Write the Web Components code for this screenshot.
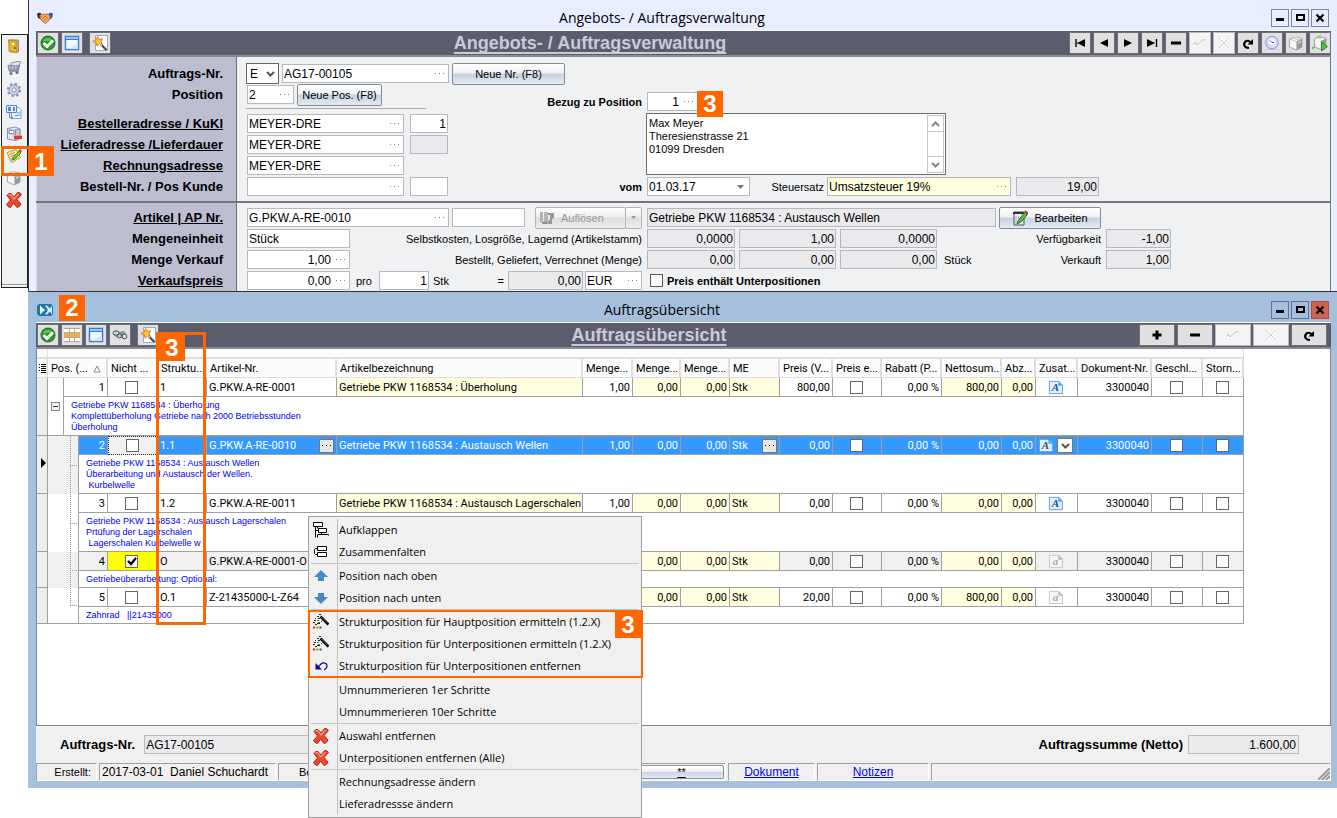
<!DOCTYPE html>
<html lang="de">
<head>
<meta charset="utf-8">
<title>Angebots- / Auftragsverwaltung</title>
<style>
html,body{margin:0;background:#fff}
body{font:11px "Liberation Sans",Arial,sans-serif;color:#000}
</style>
</head>
<body>
<order-desktop></order-desktop>
<script>
const ICONS = {
door:'<path d="M2.500 2h10v12h-8z" fill="#c9c9cc" stroke="#8f8f94"/><path d="M3 2l8 .5v12L3 13z" fill="#e9b92e" stroke="#b98a12"/><path d="M5 4h4v4H5z" fill="#fff3b8" stroke="#c39a25"/><circle cx="9" cy="10" r="1" fill="#7a5500"/>',
cart:'<path d="M2 5.500l11-1-1 5-9 1z" fill="#b4bcdf" stroke="#7880a5"/><path d="M5 5V3l7-1.500 3 .5-2 3" fill="#e8eaf2" stroke="#8b8b93"/><path d="M3 11h9l1.500-6" stroke="#85858c" stroke-width="1.400" fill="none"/><path d="M5 5v5M8 5v5M11 5v4" stroke="#7f88b5"/><circle cx="5" cy="13.500" r="1.500" fill="#6f6f77"/><circle cx="11" cy="12.500" r="1.500" fill="#6f6f77"/>',
gear:'<circle cx="8" cy="8" r="6" fill="none" stroke="#8b93b8" stroke-width="2.400" stroke-dasharray="2.350 2.350"/><circle cx="8" cy="8" r="5" fill="#d3d8ee" stroke="#8790b8"/><circle cx="8" cy="8" r="2.200" fill="#f4f5fa" stroke="#7d86ab"/>',
docs:'<path d="M9 3.500h4l2 2v9H5.500V9" fill="#f4f8ff" stroke="#7ba2dc"/><path d="M.5 1.500h10v7H.5z" fill="#eaf2ff" stroke="#4f86d6"/><path d="M2 3h3v4H2zM7 3h2v4H7z" fill="#4d86d6"/><path d="M3.500 9v4.500H6M5 12l2 1.500L5 15M11 9h3M9 12l5-1" stroke="#5c8bd0" fill="none"/>',
cabinet:'<path d="M1.500 2.500l8-1.500 4.500 2v9.500l-4.500 2-8-1.500z" fill="#e3e6f3" stroke="#8a90b5"/><path d="M9.500 3.500L14 3v9.500l-4.500 2z" fill="#c1c7e2" stroke="#8a90b5"/><path d="M3 4l5 .5V8L3 7.500z" stroke="#7079ad" fill="#fff"/><path d="M8 9h8v4H8z" rx="2" fill="#e03a1c"/><path d="M8 9h8v1H8z" fill="#f28a72"/>',
note:'<path d="M1 4.500l9-3 4.500 8-9 5z" fill="#f4ec9c" stroke="#a9a04a"/><path d="M3.500 6.500l5-2M4.500 8.500l5-2M5.500 10.500l4-2M6.500 12l4-2" stroke="#a89d50"/><path d="M7 9.500l6-6.500 2 2-6 6-3 1z" fill="#78cc3c" stroke="#3d8f22"/><path d="M12.500 2.500L14 1l2 2-1.500 2z" fill="#e04434"/>',
boxg:'<path d="M1.500 4l6-2.500 6.500 2v8.500L8.500 15l-7-3z" fill="#f7f7f7" stroke="#a6a6a6"/><path d="M8.500 6.500L14 3.500V12l-5.500 3z" fill="#979797"/><path d="M10 7l3-1.500v2L10 9.500z" fill="#c9c9c9"/><path d="M1.500 4l7 2.500L14 3.500M4.500 2.800l6.500 2" stroke="#c4c4c4" fill="none"/><path d="M5 .5h4v3H6z" fill="#cfe0c6"/>',
cross:'<path d="M1 3.500Q2.500.5 5 1.500L8 5l3.500-4.500Q14 0 15.500 2.500L11 7.500l4 4.500q-1 3-4 3.500L7.500 11l-3 4.500Q1.500 15 .5 12.500L4.500 8z" fill="#e8492f" stroke="#b22410"/><path d="M2.500 3.500Q3.500 2 5 3l3 4 4.500-5" stroke="#ff9c84" fill="none" stroke-width="1.200"/>',
hands:'<path d="M0 4q1-2 4-1l1 4-3 2q-2-2-2-5z" fill="#2a3340"/><path d="M16 4q-1-2-4-1l-1 4 3 2q2-2 2-5z" fill="#1c5fc8"/><path d="M3 5l3-1 2 .5L11 4l2 2-.5 4-4 3.500-5-4z" fill="#f2a45e" stroke="#bf6a2c"/><path d="M5 9l3-3 3 3M7 11l2-2" stroke="#c66f33" fill="none"/>',
check:'<circle cx="8" cy="8" r="7" fill="#2d9a2e" stroke="#1a6a1c"/><path d="M2.500 6a6 5 0 0 1 11 0z" fill="#79cf6e" opacity=".7"/><path d="M3.500 8l3.500 3.500 6-6" stroke="#fff" stroke-width="3" fill="none"/>',
form:'<path d="M1.500 1.500h13v13h-13z" fill="#f4f7ff" stroke="#3380d6" stroke-width="1.400"/><path d="M1.500 1.500h13v3h-13z" fill="#9ccaf8" stroke="#3380d6"/><path d="M4 14h10V8z" fill="#d9e3fa"/>',
wand:'<path d="M3.500.5h12v15h-12z" fill="#fafcff" stroke="#9aaccc"/><path d="M5.500 1.500l1.700 3 3.300-.7-1.500 3 1.500 2.700-3.200-.5L5 11l-.8-3.200L.8 6.500l3.500-1.500z" fill="#ffc83a" stroke="#d9800c"/><path d="M8.500 9l6 6" stroke="#4a4a4a" stroke-width="2.200"/><path d="M8 8.500l2 2" stroke="#c9c9c9" stroke-width="1.600"/>',
grid:'<path d="M0 1h16v14H0z" fill="#fff"/><path d="M0 6h16v5H0z" fill="#f9ab38"/><path d="M0 5.500h16M0 10.500h16M5.500 1v14M10.500 1v14M0 1.500h16M0 14.500h16" stroke="#b5a9a0"/>',
binoc:'<path d="M1 5q2-3 5-1l2 1q3-2 5 0l2 4-2 3-4-1-2 0-3-1-3-2z" fill="#8a939e"/><ellipse cx="4" cy="6" rx="3" ry="2" fill="#d5dbe1" stroke="#566"/><circle cx="12.500" cy="9.500" r="2.300" fill="#e2e7ec" stroke="#455"/><circle cx="7.500" cy="9" r="2" fill="#cdd4db" stroke="#455"/>',
first:'<path d="M4 4v8" stroke="#000" stroke-width="1.400"/><path d="M5 7.500h1L13 4v8L6 8.500H5z"/>',
prev:'<path d="M4 8l8-4v8z"/>', next:'<path d="M4 4l8 4-8 4z"/>',
last:'<path d="M3 4l8 4-8 4z"/><path d="M12.500 4v8" stroke="#000" stroke-width="1.400"/>',
minus2:'<path d="M3 6.500h10v3H3z"/>', plus:'<path d="M6.500 3.500h3v3h3v3h-3v3h-3v-3h-3v-3h3z"/>',
ok0:'<path d="M1.500 9.500l2-2 2 2.500 5-5h3" stroke="#b5b5b5" fill="none"/><path d="M2.500 10.500l2 1.500 4-4 4-3" stroke="#fff" fill="none"/>',
x0:'<path d="M4 3l9 10M13 3L4 13" stroke="#fff" stroke-width="2.500"/><path d="M3 3l10 10M13 3L3 13" stroke="#b5b5b5" stroke-dasharray="2 1"/>',
redo:'<path d="M9 13c-5 0-6-4-3.500-6.500C7.500 5 10 6 11 8" stroke="#000" stroke-width="2.200" fill="none"/><path d="M13 4v5.500H7.500z"/>',
clock:'<path d="M4 13l-1 2h10l-1-2z" fill="#c9cbe8"/><circle cx="8" cy="7.500" r="6.300" fill="#dadefa" stroke="#8e96d8"/><circle cx="8" cy="7" r="4.200" fill="#f9faff" stroke="#bfc4ef"/><path d="M8 7.500L6 5.500M8 7.500h2" stroke="#4d57a3"/>',
boxrun:'<path d="M2.500 4l5-2.500 6.500 2v8L9 14.500 2.500 12z" fill="#f7f7f7" stroke="#a6a6a6"/><path d="M9 6l5-2.500v8L9 14.500z" fill="#979797"/><path d="M5 .5h4v3H6z" fill="#8fcf7e"/><path d="M0 13q3 0 3-4M1 12l-1 1 2 1.500" stroke="#5fae56" fill="none"/><path d="M9.500 7l6 4.500-6 4.500z" fill="#4cc93c" stroke="#238c18"/>',
app:'<path d="M2 2h12l2 2v8l-2 2H2l-2-2V4z" fill="#1b78ae"/><path d="M3 3.500v9l5-4.500z" fill="#fff"/><path d="M8 3.500h2l3 3 2-3v9l-2-3-3 3H8L11 8z" fill="#d9effa"/>',
edit:'<path d="M2 2h10v13H2z" fill="#eaf0fb" stroke="#3c4a68"/><path d="M1 2h11v2H1z" fill="#333"/><path d="M4 6v8M6.500 6v8" stroke="#e39a9a"/><path d="M6 11l6-8 3 2-6 7-4 2z" fill="#55c23c" stroke="#237a16"/><path d="M12 2l1-1.500L16 2v3z" fill="#d3281c"/>',
parts:'<path d="M1 2h3v10H1zM5 2h4v12H5z" fill="#b4b4b4"/><path d="M9 3h6v5l-2 1v5H9v-3l2-1V5H9z" fill="#989898"/><path d="M2 12h6v2H4z" fill="#8a8a8a"/>',
expand:'<path d="M.5.500h9v4h-9zM5.500 6.500h8v4h-8z" fill="#fff" stroke="#000"/><path d="M2.500 4.500v11M4.500 4.500v2M2.500 8.500h3M4.500 15.500v-3h4M8.500 10.500v2h7v1" stroke="#000" fill="none"/>',
collapse:'<path d="M4.500 2.500h9v4h-9zM4.500 8.500h9v4h-9z" fill="#fff" stroke="#000"/><path d="M4.500 4.500h-2l-1 1v4l1 1h2" fill="none" stroke="#000"/>',
up:'<path d="M8 2l7 7h-4v4H5V9H1z" fill="#4d86c4"/>', down:'<path d="M8 14l7-7h-4V3H5v4H1z" fill="#4d86c4"/>',
magic:'<path d="M7.500 2.500l8 8" stroke="#000" stroke-width="2.600"/><path d="M8.500 3l6 6" stroke="#999" stroke-width=".6"/><path d="M6 .5h2M4 2.500h2M2 4.500h1M5 4.500h2M1 6.500h2M0 8.500h2M4 9.500h3M8 7.500h1M2 10.500h2" stroke="#222"/><path d="M4 6.500h2M5 8.500h2" stroke="#2a9a2a"/><path d="M0 13.500h2" stroke="#c22" stroke-width="2"/><path d="M3 13.500h2M5.500 13.500h.5" stroke="#aa2" stroke-width="2"/><path d="M6.500 13.500h2" stroke="#171" stroke-width="2"/>',
undo:'<path d="M4 10l4-4c2-2 6-1 6 1.500 0 2-1 3.500-3 4.500" stroke="#0a0a90" fill="none" stroke-width="1.200"/><path d="M2.500 5v6.500H9z" fill="#0a0a90"/>',
doca:'<path d="M1.500 1.500h10l4 4v9h-14z" fill="#e4effc" stroke="#5ba0e0"/><path d="M11 1l5 5h-5z" fill="#58a6ec"/>',
docg:'<path d="M1.500 1.500h10l4 4v9h-14z" fill="#f5f5f5" stroke="#c4c4c4"/><path d="M11 1l5 5h-5z" fill="#bbb"/>'
};
const svg = (n, s = 16) => `<svg viewBox="0 0 16 16" width="${s}" height="${s}" aria-hidden="true">${ICONS[n]}</svg>`;
const chev = (d, c = '#555') => `<svg viewBox="0 0 9 6" width="9" height="6" aria-hidden="true"><path d="${d}" fill="none" stroke="${c}" stroke-width="2"/></svg>`;
const DOWN = 'M1 1l3.500 3.500L8 1', UP = 'M1 5l3.500-3.500L8 5';
const DOTS = c => `<svg viewBox="0 0 9 2" width="9" height="2" aria-hidden="true"><path d="M0 0h1v1H0zM4 0h1v1H4zM8 0h1v1H8z" fill="${c}"/></svg>`;

const define = (name, html) => {
  customElements.define(name, class extends HTMLElement {
    constructor() {
      super();
      const t = document.createElement('template');
      t.innerHTML = typeof html === 'function' ? html(this) : html;
      this.attachShadow({ mode: 'open' }).append(t.content.cloneNode(true));
    }
  });
};

/* ---- numbered orange marks ---- */
define('call-out', `<style>
:host{position:absolute;box-sizing:border-box;z-index:5;pointer-events:none;border:0 solid #f60}
b{display:flex;align-items:center;justify-content:center;box-sizing:border-box;width:26px;height:26px;background:#f60;color:#fff;font:700 24px/26px "Liberation Sans",sans-serif}
</style><b><slot></slot></b>`);

/* ---- application window ---- */
define('app-window', el => `<style>
:host{display:flex;flex-direction:column;box-sizing:border-box;background:var(--frame);padding:0 6px 0 7px;border-left:1px solid var(--edge)}
header{display:flex;align-items:center;height:30px;padding:6px 2px 0 1px;box-sizing:border-box}
h1{flex:1;margin:0;text-align:center;font:400 14px/20px "Open Sans",sans-serif}
nav{display:flex;gap:2px}
nav button{width:18px;height:18px;padding:0;border:1px solid var(--btn);background:transparent;display:grid;place-items:center}
nav button.red{background:#cf6350;border-color:#b04a3a}
header>svg{display:block}
</style><header>${svg(el.getAttribute('icon'))}<h1><slot name="title"></slot></h1>
<nav><button aria-label="Minimieren"><svg width="10" height="10"><path d="M1 5h8v3H1z"/></svg></button>
<button aria-label="Maximieren"><svg width="10" height="10"><path d="M2 2h7v5H2z" fill="none" stroke="#000" stroke-width="2"/></svg></button>
<button class="${el.hasAttribute('active') ? 'red' : ''}" aria-label="Schließen"><svg width="10" height="10"><path d="M1.500 1.500l7 7M8.500 1.500l-7 7" stroke="#000" stroke-width="2.200"/></svg></button></nav></header><slot></slot>`);

/* ---- toolbar and its buttons ---- */
define('tool-bar', `<style>
:host{display:flex;align-items:center;height:24px;padding:0 0 0 1px;background:#5b5d6d;border-top:1px solid #fff;border-bottom:2px solid #8c8c92;gap:2px;flex:none}
h2{flex:1;margin:0;text-align:center;color:#c9cadb;font:700 18px/22px "Liberation Sans",sans-serif;text-decoration:underline;text-underline-offset:3px;text-decoration-skip-ink:none;text-decoration-thickness:2px}
</style><slot name="start"></slot><h2><slot></slot></h2><slot name="end"></slot>`);
define('tool-button', el => `<style>
:host{display:block}
:host([apart]){margin-left:4px}
button{display:grid;place-items:center;box-sizing:border-box;width:22px;height:22px;padding:0;background:#e0e0e0;border:1px solid #6f6f78;outline:0}
:host([wide]) button{width:36px}
button:disabled{background:#f4f4f4;border-color:#b8bac4}
</style><button aria-label="${el.getAttribute('label')}" ${el.hasAttribute('off') ? 'disabled' : ''}>${svg(el.getAttribute('icon'))}</button>`);

/* ---- vertical icon strip ---- */
const SIDE = [['door','Beenden'],['cart','Einkauf'],['gear','Einstellungen'],['docs','Dokumente'],['cabinet','Ablage'],['note','Auftrag bearbeiten'],['boxg','Lager'],['cross','Löschen']];
define('icon-strip', `<style>
:host{display:flex;flex-direction:column;align-items:center;gap:4px;box-sizing:border-box;width:27px;height:254px;padding:2px 2px 0 0;border:1px solid #222;background:#f0f1f3;box-shadow:inset 0 -2px #f0f1f3,inset 0 -3px #999}
button{width:18px;height:18px;padding:0;border:0;background:none;display:grid;place-items:center}
</style>${SIDE.map(([i, l]) => `<button aria-label="${l}">${svg(i)}</button>`).join('')}`);

/* ---- order form ---- */
const f = (id, val, w, o = '') => {
  const cls = o.split(' ').filter(x => x !== 'dots').join(' ');
  return `<span class="f ${cls}" style="width:${w}px"><input id="${id}" value="${val}" aria-label="${id}" ${cls.includes('ro') ? 'readonly' : ''}>${o.includes('dots') ? `<button class="d" aria-label="Auswahl">${DOTS('#888')}</button>` : ''}${o.includes('date') ? '<button class="d" aria-label="Kalender"><svg width="7" height="4"><path d="M0 0h7L3.500 4z" fill="#777"/></svg></button>' : ''}</span>`;
};
define('order-form', `<style>
:host{display:block;background:#f0f1f3;border-right:1px solid #777}
section{display:grid;grid-template-columns:201px 1fr}
section+section{border-top:2px solid #75767c}
.names{box-sizing:border-box;background:#bcbed0;border-right:1px solid #707078;border-left:1px solid #dcdde6;padding:6px 13px 4px 0;font:700 13px/21px "Liberation Sans",sans-serif;text-align:right;display:flex;flex-direction:column}
.names label,.names a{display:block;height:21px;color:#000;white-space:nowrap}
.names .gap{height:8px}
section+section .names{padding:4px 13px 0 0}
.body{display:flex;align-items:flex-start;padding:6px 0 0 10px;gap:5px}
section+section .body{padding-top:4px}
.col{display:flex;flex-direction:column}
.row{display:flex;align-items:center;height:21px;white-space:nowrap}
.left{width:395px}
.end{margin-left:auto}
.f{display:flex;flex:none;align-items:center;box-sizing:border-box;height:19px;border:1px solid #b5b8bf;background:#fff}
.ro{background:#eaeaec}.y{background:#ffffdf}
input,select,textarea{font:12px "Liberation Sans",sans-serif;color:#000}
.f input{flex:1;min-width:0;width:0;height:17px;box-sizing:border-box;padding:0 1px;border:0;background:none;outline:0}
.num input{text-align:right}
.d{width:17px;height:15px;flex:none;border:0;padding:0;background:none;display:grid;place-items:center}
.sel{position:relative;display:flex;width:33px;height:21px;margin-left:-1px}
.sel select{appearance:none;box-sizing:border-box;width:33px;height:21px;border:1px solid #666;border-radius:0;background:#fff;padding:0 3px}
.sel svg{position:absolute;right:4px;top:8px}
.b{box-sizing:border-box;height:22px;display:flex;align-items:center;justify-content:center;gap:6px;padding:0;font:11px "Liberation Sans",sans-serif;color:#000;border:1px solid #858b96;border-radius:2px;background:linear-gradient(#fff,#eef2f6 45%,#c6d2e0 50%,#e3eaf2)}
.b:disabled{color:#999;border-color:#b5b5b5;background:linear-gradient(#fff,#eee 45%,#ddd 50%,#eee)}
.split{display:flex;margin-left:10px}
.split .b+.b{width:17px;margin-left:-1px}
.split .b:first-child{justify-content:flex-start;padding-left:3px}
hr{width:180px;height:1px;border:0;background:#a9a9ad;margin:3px 0 4px -1px}
.r1{display:grid;grid-template-columns:105px auto;column-gap:5px;align-items:center;margin-top:28px;margin-left:-110px}
.r1>label{text-align:right;font-weight:700}
.addr{display:flex;box-sizing:border-box;width:300px;height:62px;margin:1px 0 1px -1px;border:1px solid #6f6f6f;background:#fff;padding:1px}
textarea{flex:1;min-width:0;resize:none;border:0;outline:0;padding:2px 1px;overflow:hidden;font:11px/13px "Liberation Sans",sans-serif;height:54px}
.sb{display:flex;flex-direction:column;justify-content:space-between;width:15px;border:1px solid #c4c4c8}
.sb button{height:16px;border:0;border-bottom:1px solid #c4c4c8;background:#fff;padding:0;display:grid;place-items:center}
.sb button+button{border:0;border-top:1px solid #c4c4c8}
.ck{display:flex;align-items:center;gap:4px;font-weight:700;margin-left:3px}
.ck input{appearance:none;width:13px;height:13px;margin:0;border:1px solid #555;background:#fff}
</style>
<section><div class="names"><label for="Auftragsnummer">Auftrags-Nr.</label><label for="Position">Position</label><span class="gap"></span><a href="#b">Bestelleradresse / KuKl</a><a href="#l">Lieferadresse /Lieferdauer</a><a href="#r">Rechnungsadresse</a><label for="Bestellnummer">Bestell-Nr. / Pos Kunde</label></div>
<div class="body"><div class="col left">
<div class="row" style="gap:3px"><span class="sel"><select aria-label="Art"><option>E</option></select>${chev(DOWN)}</span>${f('Auftragsnummer','AG17-00105',167,'dots')}<button class="b" style="width:113px">Neue Nr. (F8)</button></div>
<div class="row" style="gap:3px">${f('Position','2',47,'dots')}<button class="b" style="width:85px">Neue Pos. (F8)</button></div><hr>
<div class="row" style="gap:6px">${f('Besteller','MEYER-DRE',157,'dots')}${f('KuKl','1',38,'num')}</div>
<div class="row" style="gap:6px">${f('Lieferadresse','MEYER-DRE',157,'dots')}${f('Lieferdauer','',38,'ro')}</div>
<div class="row">${f('Rechnungsadresse','MEYER-DRE',157,'dots')}</div>
<div class="row" style="gap:6px">${f('Bestellnummer','',157,'dots')}${f('PosKunde','',38)}</div></div>
<div class="r1"><label for="Bezug">Bezug zu Position</label><div class="row">${f('Bezug','1',51,'num dots')}</div>
<span></span><div class="addr"><textarea aria-label="Adresse">Max Meyer
Theresienstrasse 21
01099 Dresden</textarea><div class="sb"><button aria-label="Nach oben">${chev(UP,'#888')}</button><button aria-label="Nach unten">${chev(DOWN,'#888')}</button></div></div>
<label for="vom">vom</label><div class="row">${f('vom','01.03.17',103,'date')}<label for="Steuersatz" style="width:74px;text-align:right;margin-right:3px">Steuersatz</label>${f('Steuersatz','Umsatzsteuer 19%',184,'y dots')}<span style="width:5px"></span>${f('Prozent','19,00',83,'ro num')}</div></div>
</div></section>
<section><div class="names"><a href="#a">Artikel | AP Nr.</a><label for="Mengeneinheit">Mengeneinheit</label><label for="Menge">Menge Verkauf</label><a href="#v">Verkaufspreis</a></div>
<div class="body"><div class="col left">
<div class="row">${f('Artikel','G.PKW.A-RE-0010',202,'dots')}<span style="width:3px"></span>${f('AP-Nummer','',73)}<span class="split"><button class="b" disabled style="width:91px">${svg('parts')}Auflösen</button><button class="b" disabled aria-label="Mehr"><svg width="5" height="3"><path d="M0 0h5L2.500 3z" fill="#999"/></svg></button></span></div>
<div class="row">${f('Mengeneinheit','Stück',103)}<span class="end">Selbstkosten, Losgröße, Lagernd (Artikelstamm)</span></div>
<div class="row">${f('Menge','1,00',103,'num dots')}<span class="end">Bestellt, Geliefert, Verrechnet (Menge)</span></div>
<div class="row">${f('Preis','0,00',103,'num dots')}<label for="pro" style="width:29px;padding-left:6px;box-sizing:border-box">pro</label>${f('pro','1',50,'num')}<span style="padding-left:4px">Stk</span><span class="end">=</span><span style="width:4px"></span>${f('Betrag','0,00',75,'ro num')}<span style="width:2px"></span>${f('Waehrung','EUR',57,'dots')}</div></div>
<div class="col">
<div class="row" style="gap:3px">${f('Artikelbezeichnung','Getriebe PKW 1168534 : Austausch Wellen',349,'ro')}<button class="b" style="width:102px">${svg('edit')}Bearbeiten</button></div>
<div class="row" style="gap:4px">${f('Selbstkosten','0,0000',88,'ro num')}${f('Losgroesse','1,00',97,'ro num')}${f('Lagernd','0,0000',97,'ro num')}<label class="end" for="Verfuegbarkeit">Verfügbarkeit</label></div>
<div class="row" style="gap:4px">${f('Bestellt','0,00',88,'ro num')}${f('Geliefert','0,00',97,'ro num')}${f('Verrechnet','0,00',97,'ro num')}<span style="padding-left:3px">Stück</span><label class="end" for="Verkauft">Verkauft</label></div>
<div class="row"><label class="ck"><input type="checkbox">Preis enthält Unterpositionen</label></div></div>
<div class="col" style="padding-top:21px"><div class="row">${f('Verfuegbarkeit','-1,00',65,'ro num')}</div><div class="row">${f('Verkauft','1,00',65,'ro num')}</div></div>
</div></section>`);

/* ---- order position grid ---- */
const COLS = [12,16,15,29,50,49,130,246,50,48,49,50,53,49,60,60,34,42,74,51,41];
const HEAD = ['Nicht ...','Struktu...','Artikel-Nr.','Artikelbezeichnung','Menge...','Menge...','Menge...','ME','Preis (V...','Preis e...','Rabatt (P...','Nettosum...','Abz...','Zusat...','Dokument-Nr.','Geschl...','Storn...'];
const ROWS = [
 {p:1,s:'1',a:'G.PKW.A-RE-0001',b:'Getriebe PKW 1168534 : Überholung',m:'1,00',pr:'800,00',n:'800,00',i:'A',t:'Getriebe PKW 1168534 : Überholung\nKomplettüberholung Getriebe nach 2000 Betriebsstunden\nÜberholung',root:1},
 {p:2,s:'1.1',a:'G.PKW.A-RE-0010',b:'Getriebe PKW 1168534 : Austausch Wellen',m:'1,00',pr:'0,00',n:'0,00',i:'A',t:'Getriebe PKW 1168534 : Austausch Wellen\nÜberarbeitung und Austausch der Wellen.\n Kurbelwelle',sel:1},
 {p:3,s:'1.2',a:'G.PKW.A-RE-0011',b:'Getriebe PKW 1168534 : Austausch Lagerschalen',m:'1,00',pr:'0,00',n:'0,00',i:'A',t:'Getriebe PKW 1168534 : Austausch Lagerschalen\nPrtüfung der Lagerschalen\n Lagerschalen Kurbelwelle w'},
 {p:4,s:'O',a:'G.PKW.A-RE-0001-O',b:'',m:'',pr:'0,00',n:'0,00',i:'a',t:'Getriebeüberarbeitung: Optional:',opt:1},
 {p:5,s:'O.1',a:'Z-21435000-L-Z64',b:'',m:'',pr:'20,00',n:'800,00',i:'a',t:'Zahnrad   ||21435000',end:1}];
const ck = (l, c) => `<input type="checkbox" aria-label="${l}" ${c ? 'checked' : ''}>`;
const doc = i => `<span class="doc ${i === 'a' ? 'g' : ''}">${svg(i === 'a' ? 'docg' : 'doca', 15)}<i>${i}</i></span>`;
const dotBtn = `<button class="dot" aria-label="Auswahl">${DOTS('#000')}</button>`;
const rowHtml = r => `<tr class="${r.sel ? 'sel' : ''} ${r.opt ? 'opt' : ''}">
<td class="ind" rowspan="2">${r.sel ? '<svg width="6" height="10"><path d="M0 0l5 5-5 5z"/></svg>' : ''}</td>
${r.root ? `<td class="tree top" rowspan="2"><button class="ex" aria-label="Zuklappen"></button></td><td class="n" colspan="2">${r.p}</td>` : `<td class="tree sub ${r.sel || r.opt ? 'grey' : ''} ${r.end ? 'fin' : ''}" colspan="2" rowspan="2"></td><td class="n">${r.p}</td>`}
<td class="c nicht">${ck('Nicht', r.opt)}</td><td>${r.s}</td><td><span class="sp">${r.a}${r.sel ? dotBtn : ''}</span></td><td class="y">${r.b}</td><td class="n">${r.m}</td><td class="n y">0,00</td><td class="n y">0,00</td><td class="y"><span class="sp">Stk${r.sel ? dotBtn : ''}</span></td><td class="n">${r.pr}</td><td class="c">${ck('Preis')}</td><td class="n">0,00 %</td><td class="n y">${r.n}</td><td class="n y">0,00</td><td class="c"><span class="z">${doc(r.i)}${r.sel ? `<button class="dd" aria-label="Öffnen">${chev(DOWN)}</button>` : ''}</span></td><td class="n">3300040</td><td class="c">${ck('Geschlossen')}</td><td class="c">${ck('Storniert')}</td></tr>
<tr><td class="t" colspan="${r.root ? 19 : 18}">${r.t}</td></tr>`;
define('order-grid', `<style>
:host{display:block;flex:1;background:#fff;border:1px solid #84848c;border-width:0 1px 1px;overflow:hidden}
table{table-layout:fixed;border-collapse:separate;border-spacing:0;width:1208px;margin-left:-1px;font:11px/13px Roboto,"Liberation Sans",sans-serif}
td,th{box-sizing:border-box;padding:0 2px;border:0 solid #a0a0a0;border-width:0 1px 1px 0;white-space:pre;overflow:hidden;text-align:left;font-weight:400;height:19px}
th{background:#fcfcfc;border:solid #dedede;border-width:0 2px 1px 0;padding:0 0 0 3px}
th svg{vertical-align:middle}
.band th{height:10px;border-width:0 1px 2px 0}
.n{text-align:right}.c{text-align:center;padding-right:4px}.y{background:#ffffdf}
.ind{background:#eeeeee;padding:0 0 0 4px;border-left:1px solid #a0a0a0}
.top{vertical-align:top;padding:6px 0 0 3px}
.ex{display:block;width:9px;height:9px;box-sizing:border-box;margin-top:18px;border:1px solid #888;padding:0;background:linear-gradient(#333,#333) 1px 3px/5px 1px no-repeat #f0f0f0}
.sub{border-bottom:0;background:repeating-linear-gradient(#999 0 1px,transparent 1px 2px) 22px 0/1px 100% no-repeat,repeating-linear-gradient(90deg,#999 0 1px,transparent 1px 2px) 22px 50%/7px 1px no-repeat}
.grey{background-color:#f0f0f0}
.fin{border-bottom:1px solid #a0a0a0;background-size:1px 50%,7px 1px}
.t{vertical-align:top;color:#00e;font:9px/11px "Liberation Sans",sans-serif;padding:3px 7px 2px;height:17px}
.opt td{background-color:#f0f0f0}
.opt .y{background:#ffffdf}.opt .nicht{background:#ff0}
.sel td:not(.ind):not(.tree){background:#3399ff;color:#fff;border-top:1px dotted #c98036}
.sel td.nicht:not(.ind){background:#f0f0f0;border:1px dotted #222}
.sp{display:flex;justify-content:space-between;align-items:center}
.dot{width:15px;height:14px;box-sizing:border-box;border:1px solid #777;background:#e6e6e6;padding:0;display:grid;place-items:center}
.z{display:flex;align-items:center;justify-content:center;gap:4px}
.doc{position:relative;display:flex}
.doc svg{display:block}
.doc i{position:absolute;inset:0;text-align:center;font:italic 700 11px/15px "Liberation Serif",serif;color:#1d4f9b}
.doc.g i{color:#aaa}
.dd{width:16px;height:15px;padding:0;border:1px solid #777;background:#fff;display:grid;place-items:center;box-sizing:border-box}
input{appearance:none;box-sizing:border-box;width:13px;height:13px;margin:0;border:1px solid #666;background:#fff;vertical-align:middle}
input:checked{background:#fff url('data:image/svg+xml,<svg xmlns="http://www.w3.org/2000/svg" width="11" height="11"><path d="M2 5l3 3 5-6" stroke="black" stroke-width="2.200" fill="none"/></svg>')}
</style><table aria-label="Auftragspositionen"><colgroup>${COLS.map(w => `<col style="width:${w}px">`).join('')}</colgroup>
<thead><tr class="band"><th></th><th colspan="20"></th></tr><tr><th><svg width="7" height="9"><path d="M0 0h1v1H0zM0 3h1v1H0zM0 6h1v1H0zM2 0h5v1H2zM2 2h5v1H2zM2 4h5v1H2zM2 6h5v1H2zM2 8h5v1H2z"/></svg></th><th colspan="3">Pos. (...  <svg width="8" height="8"><path d="M4 1l3 6H1z" fill="none" stroke="#888"/></svg></th>${HEAD.map(h => `<th>${h}</th>`).join('')}</tr></thead>
<tbody>${ROWS.map(rowHtml).join('')}</tbody></table>`);

/* ---- totals and status line ---- */
define('order-footer', `<style>
:host{display:block;flex:none;background:#f0f0f0}
.sum{display:flex;align-items:center;height:37px;padding:0 32px 0 24px;gap:9px;box-sizing:border-box;font:700 13px/19px "Liberation Sans",sans-serif}
.sum input{box-sizing:border-box;height:19px;border:1px solid #b9bbc3;background:#eaeaec;font:12px "Liberation Sans",sans-serif;padding:0 2px 0 1px}
.sum .r{margin-left:auto;margin-right:-4px}
.st{display:flex;gap:2px;height:18px;font:12px/17px "Liberation Sans",sans-serif}
.st>*{box-sizing:border-box;border:1px solid;border-color:#a0a0a0 #fff #fff #a0a0a0;white-space:pre;text-align:center}
a{color:#00f}
.go{padding:1px 0 0;width:363px}
.go button{display:block;margin-left:auto;margin-right:1px;width:85px;height:14px;box-sizing:border-box;border:1px solid #8d939e;border-radius:2px;background:linear-gradient(#fff,#eef2f6 45%,#c9d4e1 50%,#e3eaf2);padding:0;font:11px/12px "Liberation Sans",sans-serif;text-decoration:underline}
</style><div class="sum"><label for="nr">Auftrags-Nr.</label><input id="nr" value="AG17-00105" readonly style="width:276px"><label class="r" for="s">Auftragssumme (Netto)</label><input id="s" value="1.600,00" readonly style="width:111px;text-align:right"></div>
<div class="st"><span style="width:61px;text-align:right;padding-right:5px;font-size:11px">Erstellt:</span><span style="width:177px;text-align:left;padding-left:2px">2017-03-01  Daniel Schuchardt</span><span style="width:83px;text-align:left;padding-left:20px;font-size:11px">Be</span><span class="go"><button>**</button></span><span style="width:87px"><a href="#d">Dokument</a></span><span style="width:112px"><a href="#n">Notizen</a></span><span style="flex:1;display:flex;justify-content:flex-end;align-items:flex-end"><svg width="12" height="12"><path d="M0 12L12 0M4 12l8-8M8 12l4-4" stroke="#999" stroke-width="2"/></svg></span></div>`);

/* ---- context menu ---- */
define('menu-item', el => `<style>
:host{display:block}
:host([rule]){border-top:1px solid #c4c4c4;padding-top:1px}
button{display:grid;grid-template-columns:24px 1fr;align-items:center;width:100%;height:22px;padding:0 0 0 2px;border:0;background:none;text-align:left;font:11px/20px "Open Sans",sans-serif;color:#000;gap:2px}
svg{display:block}
</style><button role="menuitem"><span>${el.getAttribute('icon') ? svg(el.getAttribute('icon')) : ''}</span><slot></slot></button>`);
define('context-menu', `<style>
:host{position:absolute;z-index:4;box-sizing:border-box;width:334px;padding:2px;border:1px solid #a0a0a0;background:linear-gradient(#c0c0c0,#c0c0c0) 28px 2px/1px calc(100% - 4px) no-repeat #f0f0f0}
call-out{left:-1px;top:93px;width:335px;height:68px;border-width:2px;display:flex;justify-content:flex-end}
</style><div role="menu">
<menu-item icon="expand">Aufklappen</menu-item><menu-item icon="collapse">Zusammenfalten</menu-item>
<menu-item rule icon="up">Position nach oben</menu-item><menu-item icon="down">Position nach unten</menu-item>
<menu-item rule icon="magic">Strukturposition für Hauptposition ermitteln (1.2.X)</menu-item><menu-item icon="magic">Strukturposition für Unterpositionen ermitteln (1.2.X)</menu-item><menu-item icon="undo">Strukturposition für Unterpositionen entfernen</menu-item>
<menu-item rule>Umnummerieren 1er Schritte</menu-item><menu-item>Umnummerieren 10er Schritte</menu-item>
<menu-item rule icon="cross">Auswahl entfernen</menu-item><menu-item icon="cross">Unterpositionen entfernen (Alle)</menu-item>
<menu-item rule>Rechnungsadresse ändern</menu-item><menu-item>Lieferadressse ändern</menu-item></div><call-out>3</call-out>`);

/* ---- whole desktop ---- */
const tb = (slot, icon, label, more = '') => `<tool-button slot="${slot}" icon="${icon}" label="${label}" ${more}></tool-button>`;
define('order-desktop', `<style>
:host{position:relative;display:flex;min-height:100vh;box-sizing:border-box;padding:0 0 30px 1px;gap:0}
icon-strip{margin-top:34px;flex:none}
main{flex:1;min-width:0;display:flex;flex-direction:column}
.a{--frame:#e8eeff;--edge:#333;--btn:#7c85a8}
.b{--frame:#a6bfdc;--edge:#a6bfdc;--btn:#5f7396;flex:1;border-top:1px solid #333;padding-bottom:7px}
context-menu{left:308px;top:516px}
.one{left:1px;top:146px;width:53px;height:30px;border-width:3px 0 3px 3px;display:flex;justify-content:flex-end}
.two{left:59px;top:295px}.ref{left:697px;top:91px}
.col{left:156px;top:332px;width:50px;height:293px;border-width:3px}
</style><icon-strip></icon-strip><main>
<app-window class="a" icon="hands"><span slot="title">Angebots- / Auftragsverwaltung</span>
<tool-bar>${tb('start','check','Übernehmen')}${tb('start','form','Maske')}${tb('start','wand','Assistent','apart')}Angebots- / Auftragsverwaltung${tb('end','first','Erster')}${tb('end','prev','Zurück')}${tb('end','next','Weiter')}${tb('end','last','Letzter')}${tb('end','minus2','Löschen')}${tb('end','ok0','Speichern','off')}${tb('end','x0','Abbrechen','off')}${tb('end','redo','Aktualisieren')}${tb('end','clock','Verlauf')}${tb('end','boxg','Paket')}${tb('end','boxrun','Buchen')}</tool-bar>
<order-form></order-form></app-window>
<app-window class="b" icon="app" active><span slot="title">Auftragsübersicht</span>
<tool-bar style="padding-right:4px">${tb('start','check','Übernehmen')}${tb('start','grid','Tabelle')}${tb('start','form','Maske')}${tb('start','binoc','Suchen')}${tb('start','wand','Assistent','apart')}Auftragsübersicht${tb('end','plus','Neu','wide')}${tb('end','minus2','Löschen','wide')}${tb('end','ok0','Speichern','wide off')}${tb('end','x0','Abbrechen','wide off')}${tb('end','redo','Aktualisieren','wide')}</tool-bar>
<order-grid></order-grid><order-footer></order-footer></app-window></main>
<call-out class="one">1</call-out><call-out class="two">2</call-out><call-out class="ref">3</call-out><call-out class="col">3</call-out><context-menu></context-menu>`);
</script>
</body>
</html>
